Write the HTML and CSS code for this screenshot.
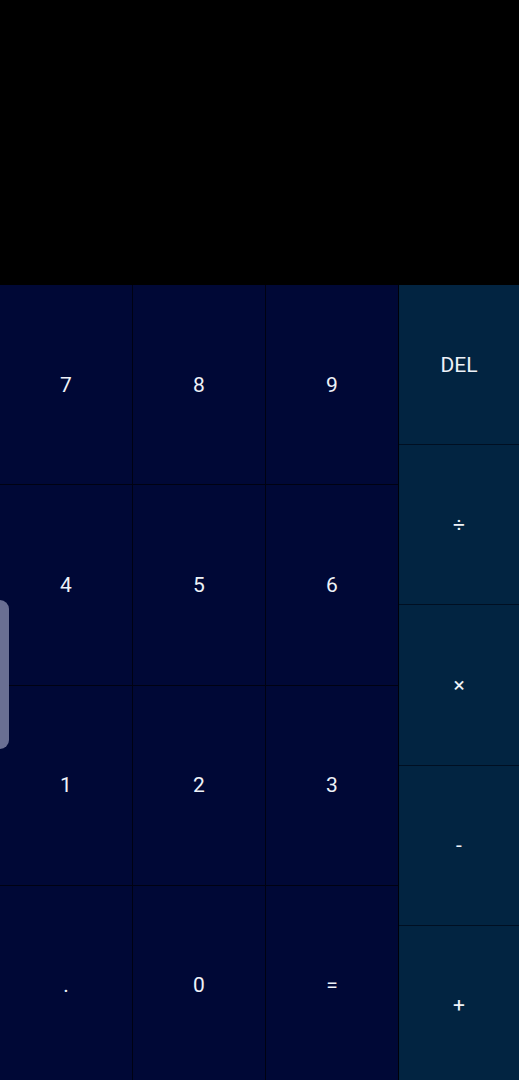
FILE: index.html
```html
<!DOCTYPE html>
<html>
<head>
<meta charset="utf-8">
<link rel="stylesheet" href="styles.css">
</head>
<body>
<div class="app">
  <div class="display"></div>
  <div class="keypad">
    <div class="nums">
      <div class="key">7</div>
      <div class="key">8</div>
      <div class="key">9</div>
      <div class="key">4</div>
      <div class="key">5</div>
      <div class="key">6</div>
      <div class="key">1</div>
      <div class="key">2</div>
      <div class="key">3</div>
      <div class="key">.</div>
      <div class="key">0</div>
      <div class="key">=</div>
    </div>
    <div class="ops">
      <div class="op">DEL</div>
      <div class="op">÷</div>
      <div class="op">×</div>
      <div class="op">-</div>
      <div class="op">+</div>
    </div>
  </div>
</div>
<div class="handle"></div>
</body>
</html>
```
FILE: styles.css
```css
html, body {
  margin: 0;
  padding: 0;
  background: #000;
  overflow: hidden;
}
body {
  width: 519px;
  height: 1080px;
  font-family: Roboto, "Noto Sans", sans-serif;
}
.app {
  display: flex;
  flex-direction: column;
}
.display {
  height: 285px;
  background: #000;
}
.keypad {
  display: flex;
  height: 800px;
  gap: 1px;
  background: #000108;
}
.nums {
  width: 398px;
  display: grid;
  grid-template-columns: repeat(3, 1fr);
  grid-template-rows: repeat(4, 1fr);
  gap: 1px;
  background: #000212;
}
.key {
  background: #000836;
  color: #eef2f8;
  font-size: 21px;
  display: flex;
  align-items: center;
  justify-content: center;
}
.ops {
  flex: 1;
  display: grid;
  grid-template-rows: repeat(5, 1fr);
  gap: 1px;
  background: #000f22;
}
.op {
  background: #022441;
  color: #eef2f8;
  font-size: 21px;
  display: flex;
  align-items: center;
  justify-content: center;
}
.handle {
  position: absolute;
  left: 0;
  top: 600px;
  width: 9px;
  height: 149px;
  background: #6a6f93;
  border-radius: 0 10px 10px 0;
}
```
